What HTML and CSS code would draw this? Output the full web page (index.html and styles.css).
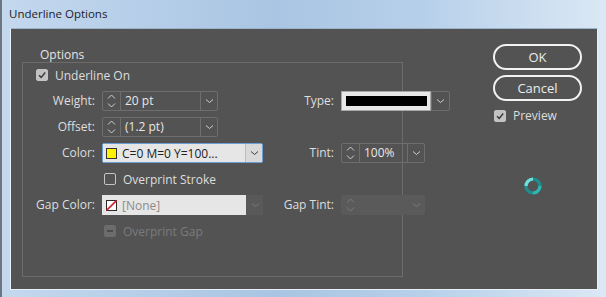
FILE: index.html
```html
<!DOCTYPE html>
<html lang="en">
<head>
    <meta charset="UTF-8">
    <title>Underline Options</title>
    <link rel="stylesheet" href="styles.css">
</head>
<body>
    <div class="window">
        <div class="titlebar">Underline Options</div>
        <div class="panel">
            <!-- options group -->
            <div class="group">
                <span class="legend">Options</span>
                <div class="grid">
                    <label class="check-row full"><span class="box checked"><svg width="10" height="10" viewBox="0 0 10 10"><path d="M2 5.2 L4.2 7.4 L8.2 2.6" fill="none" stroke="#3c3c3c" stroke-width="1.5"/></svg></span>Underline On</label>

                    <span class="lbl">Weight:</span>
                    <div class="combo short">
                        <span class="spin"><svg width="9" height="16" viewBox="0 0 9 16"><path d="M1 5.5 L4.5 2 L8 5.5 M1 10.5 L4.5 14 L8 10.5" fill="none" stroke="#cfcfcf" stroke-width="1"/></svg></span>
                        <span class="val">20 pt</span>
                        <span class="drop"><svg width="9" height="6" viewBox="0 0 9 6"><path d="M1 1.5 L4.5 4.5 L8 1.5" fill="none" stroke="#d0d0d0" stroke-width="1"/></svg></span>
                    </div>
                    <span class="lbl">Type:</span>
                    <div class="type-combo">
                        <span class="type-field"><span class="stroke-sample"></span></span>
                        <span class="drop"><svg width="9" height="6" viewBox="0 0 9 6"><path d="M1 1.5 L4.5 4.5 L8 1.5" fill="none" stroke="#d0d0d0" stroke-width="1"/></svg></span>
                    </div>

                    <span class="lbl">Offset:</span>
                    <div class="combo short">
                        <span class="spin"><svg width="9" height="16" viewBox="0 0 9 16"><path d="M1 5.5 L4.5 2 L8 5.5 M1 10.5 L4.5 14 L8 10.5" fill="none" stroke="#cfcfcf" stroke-width="1"/></svg></span>
                        <span class="val">(1.2 pt)</span>
                        <span class="drop"><svg width="9" height="6" viewBox="0 0 9 6"><path d="M1 1.5 L4.5 4.5 L8 1.5" fill="none" stroke="#d0d0d0" stroke-width="1"/></svg></span>
                    </div>
                    <span></span>
                    <span></span>

                    <span class="lbl">Color:</span>
                    <div class="swatch-combo focus">
                        <span class="swatch-field"><span class="chip yellow"></span>C=0 M=0 Y=100...</span>
                        <span class="drop light"><svg width="9" height="6" viewBox="0 0 9 6"><path d="M1 1.5 L4.5 4.5 L8 1.5" fill="none" stroke="#3a3a3a" stroke-width="1"/></svg></span>
                    </div>
                    <span class="lbl">Tint:</span>
                    <div class="combo tint">
                        <span class="spin"><svg width="9" height="16" viewBox="0 0 9 16"><path d="M1 5.5 L4.5 2 L8 5.5 M1 10.5 L4.5 14 L8 10.5" fill="none" stroke="#cfcfcf" stroke-width="1"/></svg></span>
                        <span class="val">100%</span>
                        <span class="drop"><svg width="9" height="6" viewBox="0 0 9 6"><path d="M1 1.5 L4.5 4.5 L8 1.5" fill="none" stroke="#d0d0d0" stroke-width="1"/></svg></span>
                    </div>

                    <span></span>
                    <label class="check-row inset"><span class="box"></span>Overprint Stroke</label>
                    <span></span>
                    <span></span>

                    <span class="lbl">Gap Color:</span>
                    <div class="swatch-combo disabled">
                        <span class="swatch-field"><span class="chip none"><svg width="11" height="11" viewBox="0 0 11 11"><path d="M0.5 10.5 L10.5 0.5" stroke="#d0202a" stroke-width="1.6"/></svg></span>[None]</span>
                        <span class="drop dim"><svg width="9" height="6" viewBox="0 0 9 6"><path d="M1 1.5 L4.5 4.5 L8 1.5" fill="none" stroke="#7a7a7a" stroke-width="1"/></svg></span>
                    </div>
                    <span class="lbl">Gap Tint:</span>
                    <div class="combo tint disabled">
                        <span class="spin"><svg width="9" height="16" viewBox="0 0 9 16"><path d="M1 5.5 L4.5 2 L8 5.5 M1 10.5 L4.5 14 L8 10.5" fill="none" stroke="#7c7c7c" stroke-width="1"/></svg></span>
                        <span class="val"></span>
                        <span class="drop"><svg width="9" height="6" viewBox="0 0 9 6"><path d="M1 1.5 L4.5 4.5 L8 1.5" fill="none" stroke="#7c7c7c" stroke-width="1"/></svg></span>
                    </div>

                    <span></span>
                    <label class="check-row inset muted"><span class="box dis"><span class="dash"></span></span>Overprint Gap</label>
                </div>
            </div>

            <!-- buttons -->
            <div class="side">
                <button class="btn">OK</button>
                <button class="btn">Cancel</button>
                <label class="check-row preview"><span class="box checked"><svg width="10" height="10" viewBox="0 0 10 10"><path d="M2 5.2 L4.2 7.4 L8.2 2.6" fill="none" stroke="#3c3c3c" stroke-width="1.5"/></svg></span>Preview</label>
                <div class="busy">
                    <svg width="20" height="20" viewBox="0 0 20 20">
                        <circle cx="10" cy="10" r="7" fill="none" stroke="#1e8f8f" stroke-width="3.2"/>
                        <path d="M3 10 A7 7 0 0 1 10 3" fill="none" stroke="#6fe0dc" stroke-width="3.2"/>
                        <path d="M17 10 A7 7 0 0 1 10 17" fill="none" stroke="#2fb8b2" stroke-width="3.2"/>
                    </svg>
                </div>
            </div>
        </div>
    </div>
</body>
</html>
```

FILE: styles.css
```css
body {
    margin: 0;
    font-family: "Open Sans", "Noto Sans", sans-serif;
    background: #b9d0e8;
}

.window {
    width: 606px;
    height: 297px;
    box-sizing: border-box;
    padding: 0 8px 7px 8px;
    background: linear-gradient(90deg, #c4d8ee 0%, #a9c5e3 45%, #b7d0ea 70%, #dbe8f5 100%);
    border-left: 2px solid #6d7680;
    display: flex;
    flex-direction: column;
}

.titlebar {
    height: 28px;
    line-height: 28px;
    margin-left: -1px;
    font-size: 11.5px;
    color: #1b1b2a;
}

/* dark dialog body */
.panel {
    flex: 1;
    background: #535353;
    border: 1px solid #e9f0f8;
    border-top-color: #9cb3cb;
    display: flex;
    align-items: flex-start;
    padding-left: 11px;
    color: #dedede;
    font-size: 12px;
}

.group {
    width: 379px;
    height: 213px;
    margin-top: 33px;
    border: 1px solid #6c6c6c;
}

.legend {
    display: block;
    width: fit-content;
    height: 14px;
    line-height: 14px;
    margin: -15px 0 0 14px;
    padding: 0 3px;
    background: #535353;
    color: #e4e4e4;
}

.grid {
    display: grid;
    grid-template-columns: 72px 161px 64px 109px;
    grid-auto-rows: 20px;
    column-gap: 7px;
    row-gap: 6px;
    padding-top: 3px;
}

.lbl {
    text-align: right;
    line-height: 20px;
    white-space: nowrap;
}

.full {
    grid-column: 1 / -1;
    padding-left: 13px;
}

.inset {
    padding-left: 2px;
}

.check-row {
    display: flex;
    align-items: center;
    gap: 7px;
    white-space: nowrap;
}

.muted {
    color: #7b7b7b;
}

.box {
    width: 10px;
    height: 10px;
    border: 1px solid #c4c4c4;
    border-radius: 2px;
    display: flex;
    align-items: center;
    justify-content: center;
}

.box.checked {
    background: #c2c2c2;
}

.box.dis {
    background: #6c6c6c;
    border-color: #6c6c6c;
}

.dash {
    width: 6px;
    height: 2px;
    background: #4c4c4c;
}

/* spinner / dropdown fields */
.combo {
    display: flex;
    height: 20px;
    box-sizing: border-box;
    border: 1px solid #6e6e6e;
    border-radius: 2px;
}

.combo.short {
    width: 116px;
}

.combo.tint {
    width: 84px;
}

.combo.disabled {
    background: #5a5a5a;
    border-color: #5a5a5a;
}

.spin {
    width: 17px;
    border-right: 1px solid #6e6e6e;
    display: flex;
    align-items: center;
    justify-content: center;
}

.disabled .spin,
.disabled .drop {
    border-color: transparent;
}

.val {
    flex: 1;
    padding-left: 4px;
    line-height: 18px;
    color: #e8e8e8;
}

.drop {
    width: 16px;
    border-left: 1px solid #6e6e6e;
    display: flex;
    align-items: center;
    justify-content: center;
}

.type-combo {
    display: flex;
    width: 109px;
    height: 20px;
}

.type-field {
    width: 91px;
    box-sizing: border-box;
    border: 1px solid #a8a8a8;
    background: #e8e8e8;
    padding: 4px 3px 0 4px;
}

.stroke-sample {
    display: block;
    height: 10px;
    background: #000;
}

.type-combo .drop {
    width: 17px;
    border: 1px solid #6e6e6e;
    border-radius: 0 2px 2px 0;
}

.swatch-combo {
    display: flex;
    height: 20px;
    box-sizing: border-box;
}

.swatch-combo.focus {
    border: 1px solid #6d9fd6;
    border-radius: 2px;
    background: #e4e4e4;
    color: #222;
}

.swatch-field {
    flex: 1;
    display: flex;
    align-items: center;
    gap: 5px;
    padding-left: 3px;
    background: #e6e6e6;
}

.swatch-combo.disabled .swatch-field {
    width: 140px;
    flex: none;
    color: #8c8c8c;
    padding-left: 4px;
}

.drop.light {
    background: #d9d9d9;
    border-left-color: #bdbdbd;
}

.drop.dim {
    width: 19px;
    background: #595959;
}

.chip {
    width: 11px;
    height: 11px;
    box-sizing: border-box;
    border: 1px solid #333;
}

.chip.yellow {
    background: #fff200;
}

.chip.none {
    background: #fff;
    border-color: #2a2a2a;
    display: flex;
}

.chip.none svg {
    margin: -1px;
}

/* right column */
.side {
    margin-left: 90px;
    margin-top: 15px;
    width: 89px;
    display: flex;
    flex-direction: column;
    gap: 5px;
}

.btn {
    height: 26px;
    border: 2px solid #f2f2f2;
    border-radius: 13px;
    background: transparent;
    color: #ececec;
    font-family: inherit;
    font-size: 13px;
    padding: 0;
}

.preview {
    margin-top: 1px;
    padding-left: 1px;
}

.busy {
    margin-top: 47px;
    margin-left: 30px;
}
```
